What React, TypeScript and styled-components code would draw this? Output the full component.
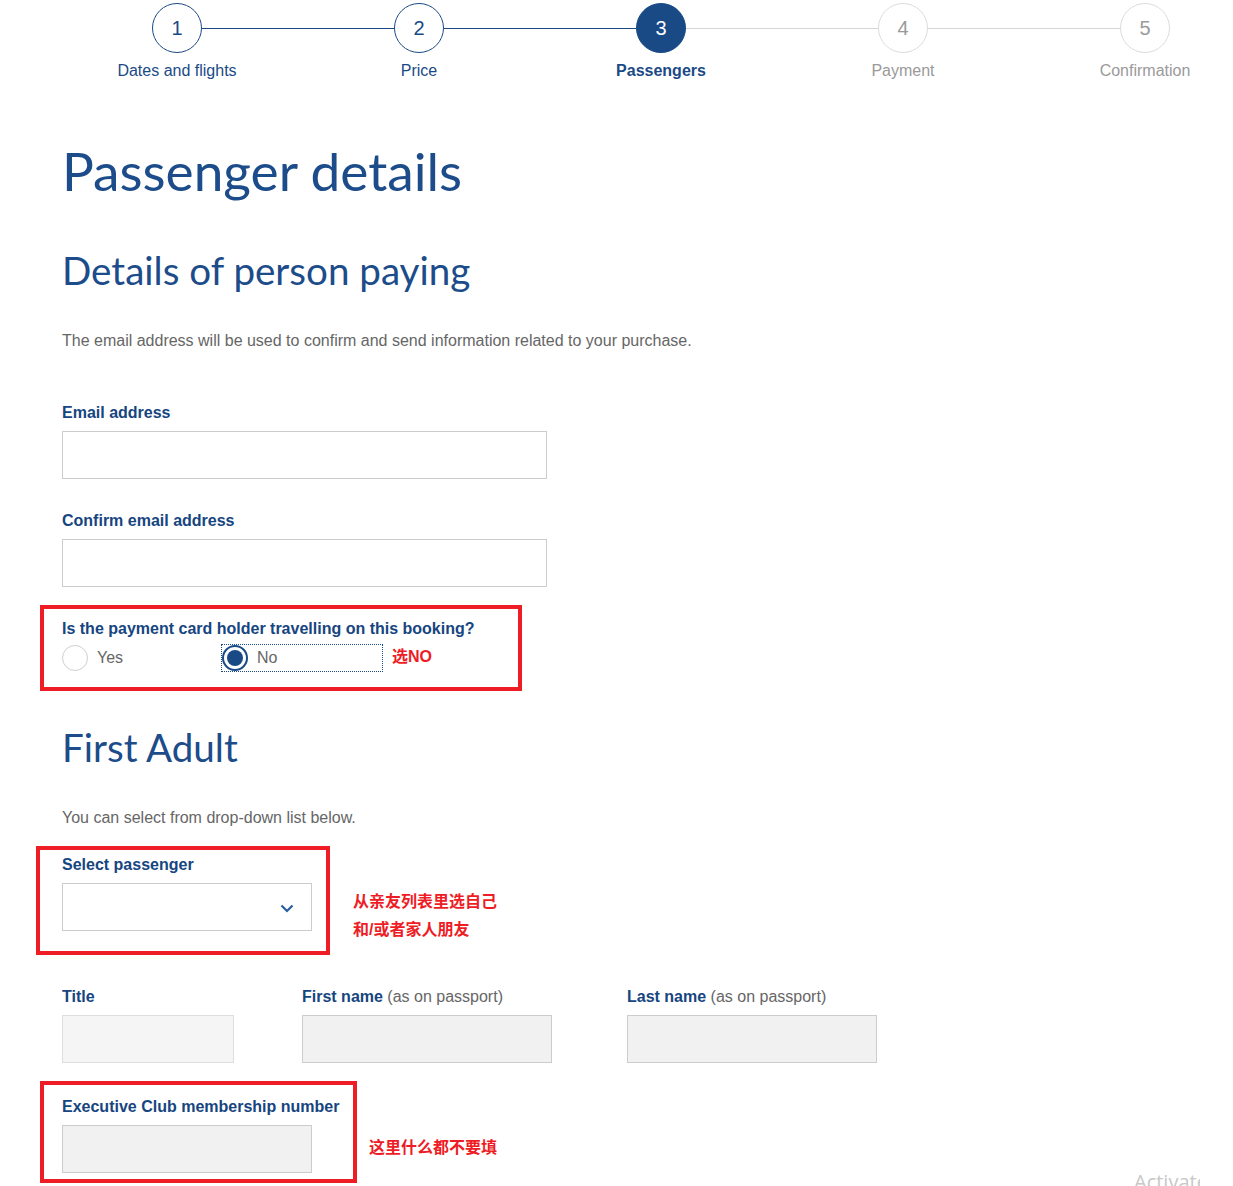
import React from "react";
import styled, { createGlobalStyle, css } from "styled-components";

const BLUE = "#1a4a86";
const HEAD = "#1c4c8a";
const LABEL = "#16457f";
const GREY_TEXT = "#666666";
const RED = "#ee1c25";

const Global = createGlobalStyle`
  html, body { margin: 0; padding: 0; background: #fff; }
  body {
    width: 1233px;
    height: 1186px;
    overflow: hidden;
    font-family: "Liberation Sans", Arial, sans-serif;
    position: relative;
  }
  * { box-sizing: border-box; }
`;

const Page = styled.div`
  width: 1233px;
  height: 1186px;
  position: relative;
  overflow: hidden;
`;

/* ---------- Stepper ---------- */
const Stepper = styled.div`
  display: flex;
  padding-left: 56px;
  margin-top: 3px;
  width: 1400px;
`;

type StepState = "done" | "active" | "todo";

const Step = styled.div`
  width: 242px;
  flex: 0 0 242px;
  display: flex;
  flex-direction: column;
  align-items: center;
`;

const Track = styled.div`
  width: 100%;
  display: flex;
  align-items: center;
`;

const HalfLine = styled.div<{ $color: string }>`
  flex: 1;
  height: 1px;
  background: ${(p) => p.$color};
`;

const Circle = styled.div<{ $state: StepState }>`
  width: 50px;
  height: 50px;
  border-radius: 50%;
  display: flex;
  align-items: center;
  justify-content: center;
  font-size: 20px;
  flex: 0 0 50px;
  ${(p) =>
    p.$state === "done"
      ? css`
          border: 1px solid ${BLUE};
          color: ${BLUE};
          background: #fff;
        `
      : p.$state === "active"
      ? css`
          border: 1px solid ${BLUE};
          color: #fff;
          background: ${BLUE};
        `
      : css`
          border: 1px solid #dcdcdc;
          color: #9a9a9a;
          background: #fff;
        `}
`;

const StepLabel = styled.div<{ $state: StepState }>`
  margin-top: 8px;
  font-size: 16px;
  line-height: 20px;
  color: ${(p) => (p.$state === "todo" ? "#9a9a9a" : BLUE)};
  font-weight: ${(p) => (p.$state === "active" ? 700 : 400)};
  white-space: nowrap;
`;

/* ---------- Content ---------- */
const Content = styled.div`
  padding-left: 62px;
  display: flex;
  flex-direction: column;
  align-items: flex-start;
`;

const H1 = styled.h1`
  margin: 59px 0 0;
  font-family: Lato, "Open Sans", sans-serif;
  font-weight: 400;
  font-size: 53.2px;
  line-height: 60px;
  color: ${HEAD};
  white-space: nowrap;
`;

const H2 = styled.h2<{ $mt: number }>`
  margin: ${(p) => p.$mt}px 0 0;
  font-family: Lato, "Open Sans", sans-serif;
  font-weight: 400;
  font-size: 38.6px;
  line-height: 44px;
  color: ${HEAD};
  white-space: nowrap;
`;

const Para = styled.p<{ $mt: number }>`
  margin: ${(p) => p.$mt}px 0 0;
  padding-top: 1px;
  font-size: 16px;
  line-height: 20px;
  color: ${GREY_TEXT};
`;

const Field = styled.div<{ $mt?: number }>`
  margin-top: ${(p) => p.$mt ?? 0}px;
  display: flex;
  flex-direction: column;
`;

const Label = styled.label`
  padding-top: 1px;
  font-size: 16px;
  line-height: 20px;
  font-weight: 700;
  color: ${LABEL};
  white-space: nowrap;
`;

const Light = styled.span`
  font-weight: 400;
  color: ${GREY_TEXT};
`;

const TextInput = styled.div<{ $w: number; $variant?: "white" | "grey" | "light" }>`
  margin-top: 8px;
  width: ${(p) => p.$w}px;
  height: 48px;
  ${(p) =>
    p.$variant === "grey"
      ? css`
          background: #f1f1f1;
          border: 1px solid #cccccc;
        `
      : p.$variant === "light"
      ? css`
          background: #f5f5f5;
          border: 1px solid #dedede;
        `
      : css`
          background: #fff;
          border: 1px solid #cccccc;
        `}
`;

const SelectBox = styled.div`
  margin-top: 8px;
  width: 250px;
  height: 48px;
  border: 1px solid #cccccc;
  background: #fff;
  display: flex;
  align-items: center;
  justify-content: flex-end;
  padding-right: 17px;
  padding-top: 2px;
`;

const Annotated = styled.div<{ $ml: number; $w: number; $pt: number; $pb: number }>`
  margin-left: ${(p) => p.$ml}px;
  width: ${(p) => p.$w}px;
  border: 4px solid ${RED};
  padding: ${(p) => p.$pt}px 0 ${(p) => p.$pb}px ${(p) => -p.$ml - 4}px;
  display: flex;
  flex-direction: column;
`;

const AnnotRow = styled.div<{ $mt: number }>`
  margin-top: ${(p) => p.$mt}px;
  display: flex;
  align-items: flex-start;
`;

const Note = styled.div<{ $ml: number; $mt: number }>`
  margin-left: ${(p) => p.$ml}px;
  margin-top: ${(p) => p.$mt}px;
  font-family: "Liberation Sans", "Noto Sans CJK SC", sans-serif;
  font-weight: 700;
  font-size: 16px;
  line-height: 28px;
  color: ${RED};
  white-space: nowrap;
`;

const RadioRow = styled.div`
  margin-top: 6px;
  display: flex;
  align-items: center;
`;

const RadioOption = styled.div<{ $focused?: boolean }>`
  width: 160px;
  height: 26px;
  display: flex;
  align-items: center;
  gap: 9px;
  outline: ${(p) => (p.$focused ? `1px dotted ${BLUE}` : "none")};
  outline-offset: 0;
`;

const RadioCircle = styled.span<{ $checked?: boolean }>`
  width: 26px;
  height: 26px;
  border-radius: 50%;
  flex: 0 0 26px;
  display: flex;
  align-items: center;
  justify-content: center;
  border: ${(p) => (p.$checked ? `2px solid ${BLUE}` : "1px solid #cfcfcf")};
  background: #fff;
  &::after {
    content: "";
    display: ${(p) => (p.$checked ? "block" : "none")};
    width: 16px;
    height: 16px;
    border-radius: 50%;
    background: ${BLUE};
  }
`;

const RadioText = styled.span`
  font-size: 16px;
  line-height: 20px;
  color: ${GREY_TEXT};
`;

const NameGrid = styled.div`
  margin-top: 31px;
  display: grid;
  grid-template-columns: 240px 325px 250px;
`;

const Watermark = styled.div`
  position: absolute;
  left: 1134px;
  top: 1168px;
  width: 66px;
  overflow: hidden;
  font-family: "Open Sans", sans-serif;
  font-size: 20px;
  line-height: 28px;
  color: #c8c8c8;
  white-space: nowrap;
`;

const steps: { n: number; label: string; state: StepState }[] = [
  { n: 1, label: "Dates and flights", state: "done" },
  { n: 2, label: "Price", state: "done" },
  { n: 3, label: "Passengers", state: "active" },
  { n: 4, label: "Payment", state: "todo" },
  { n: 5, label: "Confirmation", state: "todo" },
];

const Chevron = () => (
  <svg width="14" height="9" viewBox="0 0 14 9">
    <polyline points="1.5,1.5 7,7 12.5,1.5" fill="none" stroke="#2a5f9e" strokeWidth="2.2" />
  </svg>
);

export default function App() {
  return (
    <Page>
      <Global />
      <Stepper>
        {steps.map((s, i) => {
          const leftColor =
            i === 0 ? "transparent" : steps[i].state === "todo" ? "#d6d6d6" : BLUE;
          const rightColor =
            i === steps.length - 1
              ? "transparent"
              : steps[i + 1].state === "todo"
              ? "#d6d6d6"
              : BLUE;
          return (
            <Step key={s.n}>
              <Track>
                <HalfLine $color={leftColor} />
                <Circle $state={s.state}>{s.n}</Circle>
                <HalfLine $color={rightColor} />
              </Track>
              <StepLabel $state={s.state}>{s.label}</StepLabel>
            </Step>
          );
        })}
      </Stepper>

      <Content>
        <H1>Passenger details</H1>
        <H2 $mt={48}>Details of person paying</H2>
        <Para $mt={38}>
          The email address will be used to confirm and send information related to your purchase.
        </Para>

        <Field $mt={51}>
          <Label>Email address</Label>
          <TextInput $w={485} />
        </Field>
        <Field $mt={31}>
          <Label>Confirm email address</Label>
          <TextInput $w={485} />
        </Field>

        <AnnotRow $mt={18}>
          <Annotated $ml={-22} $w={482} $pt={9} $pb={16}>
            <Label>Is the payment card holder travelling on this booking?</Label>
            <RadioRow>
              <RadioOption>
                <RadioCircle />
                <RadioText>Yes</RadioText>
              </RadioOption>
              <RadioOption $focused>
                <RadioCircle $checked />
                <RadioText>No</RadioText>
              </RadioOption>
              <Note $ml={10} $mt={-2}>选NO</Note>
            </RadioRow>
          </Annotated>
        </AnnotRow>

        <H2 $mt={34}>First Adult</H2>
        <Para $mt={38}>You can select from drop-down list below.</Para>

        <AnnotRow $mt={18}>
          <Annotated $ml={-26} $w={294} $pt={4} $pb={20}>
            <Label>Select passenger</Label>
            <SelectBox>
              <Chevron />
            </SelectBox>
          </Annotated>
          <Note $ml={23} $mt={42}>
            从亲友列表里选自己
            <br />
            和/或者家人朋友
          </Note>
        </AnnotRow>

        <NameGrid>
          <Field>
            <Label>Title</Label>
            <TextInput $w={172} $variant="light" />
          </Field>
          <Field>
            <Label>
              First name <Light>(as on passport)</Light>
            </Label>
            <TextInput $w={250} $variant="grey" />
          </Field>
          <Field>
            <Label>
              Last name <Light>(as on passport)</Light>
            </Label>
            <TextInput $w={250} $variant="grey" />
          </Field>
        </NameGrid>

        <AnnotRow $mt={18}>
          <Annotated $ml={-22} $w={317} $pt={11} $pb={6}>
            <Label>Executive Club membership number</Label>
            <TextInput $w={250} $variant="grey" />
          </Annotated>
          <Note $ml={12} $mt={53}>这里什么都不要填</Note>
        </AnnotRow>
      </Content>

      <Watermark>Activate Windows</Watermark>
    </Page>
  );
}
